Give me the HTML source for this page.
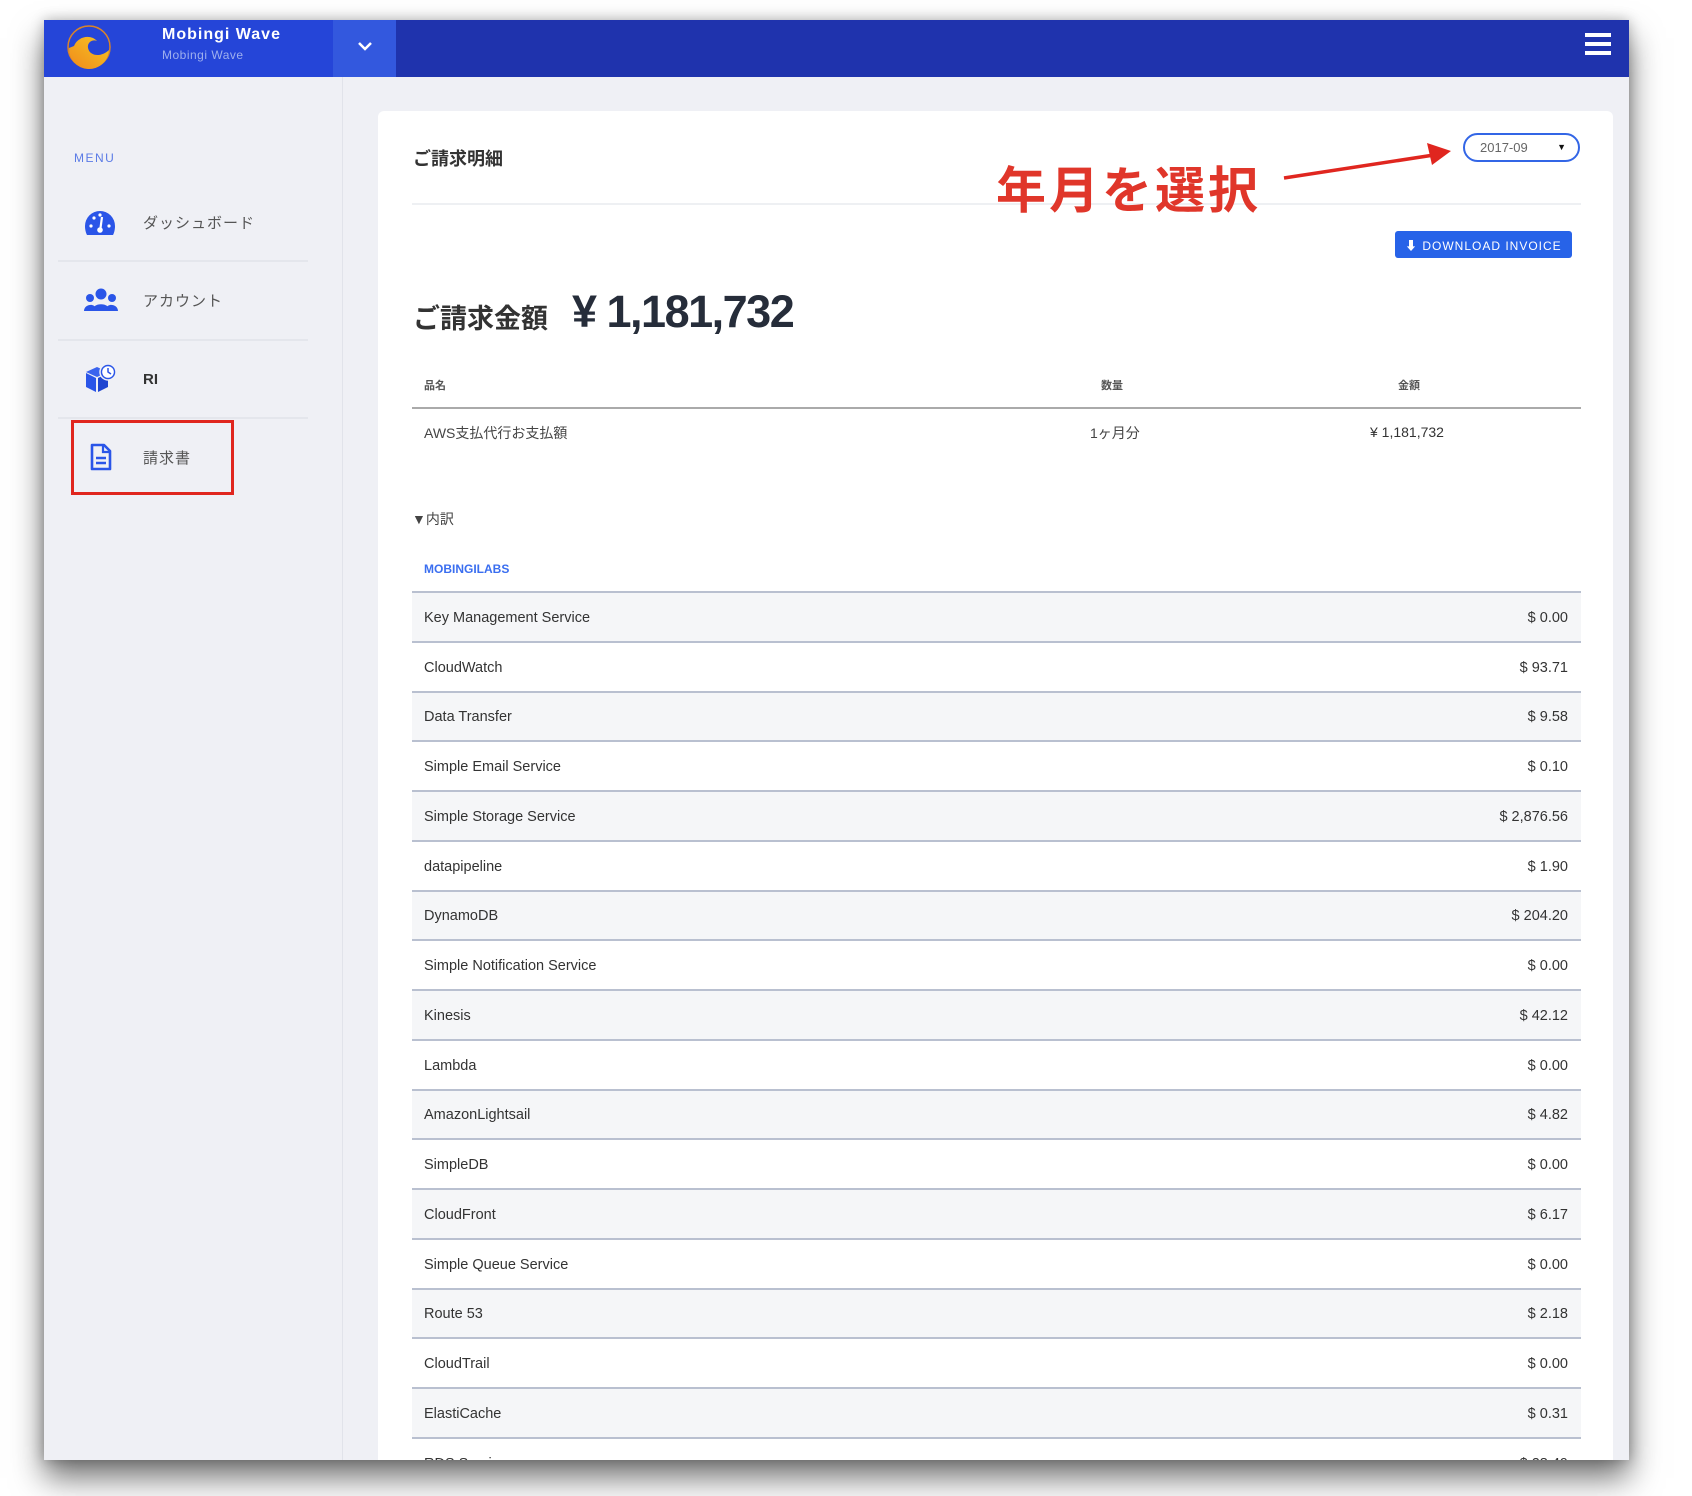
<!DOCTYPE html>
<html><head><meta charset="utf-8">
<style>
*{box-sizing:border-box;margin:0;padding:0}
body{width:1692px;height:1496px;background:#fff;position:relative;overflow:hidden;font-family:"Liberation Sans","Noto Sans CJK JP",sans-serif;color:#333}
#win{position:absolute;left:44px;top:20px;width:1585px;height:1440px;background:#eff0f5;overflow:hidden;box-shadow:0 18px 30px rgba(0,0,0,.55),0 0 12px rgba(0,0,0,.25)}
.abs{position:absolute}
#hdr{left:0;top:0;width:1585px;height:57px;background:#1f33ad}
#hdrL{left:0;top:0;width:289px;height:57px;background:#2545d8}
#hdrD{left:289px;top:0;width:63px;height:57px;background:#3358de}
#side{left:0;top:57px;width:299px;height:1383px;border-right:1px solid #e1e3ea}
.item{position:absolute;left:99px;font-size:15px;color:#555;letter-spacing:1px}
.div{position:absolute;left:14px;width:250px;height:2px;background:#e4e6ec}
#card{left:334px;top:91px;width:1235px;height:1400px;background:#fff;border-radius:6px}
.row{height:49.75px;border-bottom:2px solid #b9c0d0;display:flex;align-items:center;justify-content:space-between;padding:2px 13px 0 12px;font-size:14.5px;color:#333}
.row:nth-child(odd){background:#f5f6f8}
</style></head><body>
<div id="win">
 <div id="hdr" class="abs"></div>
 <div id="hdrL" class="abs"></div>
 <div id="hdrD" class="abs"></div>
 <svg class="abs" style="left:22px;top:4px" width="46" height="46" viewBox="0 0 46 46">
  <defs><linearGradient id="g" x1="0" y1="1" x2="1" y2="0"><stop offset="0" stop-color="#f08a1c"/><stop offset="1" stop-color="#f6c623"/></linearGradient></defs>
  <circle cx="23" cy="23" r="21" fill="none" stroke="#d9842a" stroke-width="1.5"/>
  <path d="M3 24 A20 20 0 0 0 43 26 C36 33 24 33 22 24 C21 18 27 15 31 17 C25 10 12 12 8 22 Z" fill="url(#g)"/>
 </svg>
 <div class="abs" style="left:118px;top:6px;color:#fff;font-weight:bold;font-size:16px;letter-spacing:1px">Mobingi Wave</div>
 <div class="abs" style="left:118px;top:28px;color:#9fb0ee;font-size:12px;letter-spacing:.5px">Mobingi Wave</div>
 <svg class="abs" style="left:312px;top:20px" width="18" height="14" viewBox="0 0 18 14"><path d="M3 3 L9 9 L15 3" fill="none" stroke="#fff" stroke-width="2.5"/></svg>
 <div class="abs" style="left:1541px;top:13px;width:26px;height:4px;background:#fff"></div>
 <div class="abs" style="left:1541px;top:22px;width:26px;height:4px;background:#fff"></div>
 <div class="abs" style="left:1541px;top:31px;width:26px;height:4px;background:#fff"></div>

 <div id="side" class="abs">
  <div class="abs" style="left:30px;top:74px;font-size:12px;color:#5b7be6;letter-spacing:1.5px">MENU</div>
 </div>
 <svg class="abs" style="left:40px;top:189px" width="32" height="28" viewBox="0 0 32 28"><path d="M16 2 A15 15 0 0 0 1 17 C1 21 2 24 3 26 L29 26 C30 24 31 21 31 17 A15 15 0 0 0 16 2Z" fill="#2a55e8"/><circle cx="7" cy="17" r="1.6" fill="#fff"/><circle cx="10" cy="9" r="1.6" fill="#fff"/><circle cx="16" cy="6" r="1.6" fill="#fff"/><circle cx="25" cy="17" r="1.6" fill="#fff"/><path d="M18 8 L16.5 19" stroke="#fff" stroke-width="2.2"/><circle cx="16" cy="21" r="2.8" fill="#fff"/></svg>
 <div class="item" style="top:192px">ダッシュボード</div>
 <div class="div" style="top:240px"></div>
 <svg class="abs" style="left:39px;top:267px" width="36" height="26" viewBox="0 0 36 26"><circle cx="18" cy="7" r="5.5" fill="#2a55e8"/><circle cx="7" cy="11" r="4" fill="#2a55e8"/><circle cx="29" cy="11" r="4" fill="#2a55e8"/><path d="M9 24 C9 15 27 15 27 24Z" fill="#2a55e8"/><path d="M1 24 C1 17 12 16 12 21 L12 24Z M35 24 C35 17 24 16 24 21 L24 24Z" fill="#2a55e8"/></svg>
 <div class="item" style="top:270px">アカウント</div>
 <div class="div" style="top:319px"></div>
 <svg class="abs" style="left:40px;top:342px" width="34" height="32" viewBox="0 0 34 32"><path d="M2 10 L13 5 L24 10 L13 15Z" fill="#3a63ee"/><path d="M2 11 L12 16 L12 30 L2 25Z" fill="#2a55e8"/><path d="M14 16 L24 11 L24 25 L14 30Z" fill="#1f45d0"/><circle cx="24" cy="10" r="8" fill="#2a55e8" stroke="#eff0f5" stroke-width="1.5"/><circle cx="24" cy="10" r="5.8" fill="#fff"/><path d="M24 6 L24 10 L27 12" stroke="#2a55e8" stroke-width="1.5" fill="none"/></svg>
 <div class="item" style="top:351px;color:#333;font-weight:bold;letter-spacing:0">RI</div>
 <div class="div" style="top:397px"></div>
 <svg class="abs" style="left:46px;top:423px" width="22" height="28" viewBox="0 0 22 28"><path d="M2 2 L14 2 L20 8 L20 26 L2 26Z" fill="none" stroke="#2a55e8" stroke-width="2.6" stroke-linejoin="round"/><path d="M13 2 L13 9 L20 9" fill="none" stroke="#2a55e8" stroke-width="2.2"/><path d="M6 15 H16 M6 20 H16" stroke="#2a55e8" stroke-width="2.4"/></svg>
 <div class="item" style="top:427px">請求書</div>
 <div class="abs" style="left:27px;top:400px;width:163px;height:75px;border:3px solid #e0261f"></div>

 <div id="card" class="abs">
  <div class="abs" style="left:35px;top:34px;font-size:18px;font-weight:bold;color:#333">ご請求明細</div>
  <div class="abs" style="left:34px;top:92px;width:1169px;height:2px;background:#eef0f3"></div>
  <div class="abs" style="left:1085px;top:22px;width:117px;height:29px;border:2px solid #3366e6;border-radius:15px;font-size:13px;color:#666;padding:5px 0 0 15px">2017-09<span style="position:absolute;right:12px;top:7px;font-size:9px;color:#111">▼</span></div>
  <div class="abs" style="left:618px;top:50px;font-size:50px;font-weight:bold;color:#e0362a;letter-spacing:3px;line-height:60px">年月を選択</div>
  <svg class="abs" style="left:880px;top:20px" width="210" height="60" viewBox="0 0 210 60"><path d="M26 47 L176 24" stroke="#e0261f" stroke-width="3.5"/><path d="M193 20 L169 12 L174 34Z" fill="#e0261f"/></svg>
  <div class="abs" style="left:1017px;top:120px;width:177px;height:27px;background:#2763e8;border-radius:3px;color:#fff;font-size:12px;letter-spacing:1px;padding:6px 0 0 10px">⬇ DOWNLOAD INVOICE</div>
  <div class="abs" style="left:35px;top:186px;font-size:27px;font-weight:bold;color:#333">ご請求金額</div>
  <div class="abs" style="left:194px;top:175px;font-size:45px;font-weight:bold;color:#262d3a;letter-spacing:-1.5px">¥ 1,181,732</div>
  <div class="abs" style="left:46px;top:266px;font-size:11px;font-weight:bold;color:#555">品名</div>
  <div class="abs" style="left:723px;top:266px;font-size:11px;font-weight:bold;color:#555">数量</div>
  <div class="abs" style="left:1020px;top:266px;font-size:11px;font-weight:bold;color:#555">金額</div>
  <div class="abs" style="left:34px;top:296px;width:1169px;height:2px;background:#aaa"></div>
  <div class="abs" style="left:46px;top:312px;font-size:14px;color:#444">AWS支払代行お支払額</div>
  <div class="abs" style="left:712px;top:312px;font-size:14px;color:#444">1ヶ月分</div>
  <div class="abs" style="left:992px;top:313px;font-size:14px;color:#333">¥ 1,181,732</div>
  <div class="abs" style="left:34px;top:398px;font-size:14px;color:#444">▼内訳</div>
  <div class="abs" style="left:46px;top:451px;font-size:12px;font-weight:bold;color:#3a6ef0">MOBINGILABS</div>
  <div class="abs" style="left:34px;top:480px;width:1169px;border-top:2px solid #b9c0d0">
   <div class="row"><span>Key Management Service</span><span>$ 0.00</span></div>
   <div class="row"><span>CloudWatch</span><span>$ 93.71</span></div>
   <div class="row"><span>Data Transfer</span><span>$ 9.58</span></div>
   <div class="row"><span>Simple Email Service</span><span>$ 0.10</span></div>
   <div class="row"><span>Simple Storage Service</span><span>$ 2,876.56</span></div>
   <div class="row"><span>datapipeline</span><span>$ 1.90</span></div>
   <div class="row"><span>DynamoDB</span><span>$ 204.20</span></div>
   <div class="row"><span>Simple Notification Service</span><span>$ 0.00</span></div>
   <div class="row"><span>Kinesis</span><span>$ 42.12</span></div>
   <div class="row"><span>Lambda</span><span>$ 0.00</span></div>
   <div class="row"><span>AmazonLightsail</span><span>$ 4.82</span></div>
   <div class="row"><span>SimpleDB</span><span>$ 0.00</span></div>
   <div class="row"><span>CloudFront</span><span>$ 6.17</span></div>
   <div class="row"><span>Simple Queue Service</span><span>$ 0.00</span></div>
   <div class="row"><span>Route 53</span><span>$ 2.18</span></div>
   <div class="row"><span>CloudTrail</span><span>$ 0.00</span></div>
   <div class="row"><span>ElastiCache</span><span>$ 0.31</span></div>
   <div class="row"><span>RDS Service</span><span>$ 28.49</span></div>
  </div>
 </div>
</div>
</body></html>
